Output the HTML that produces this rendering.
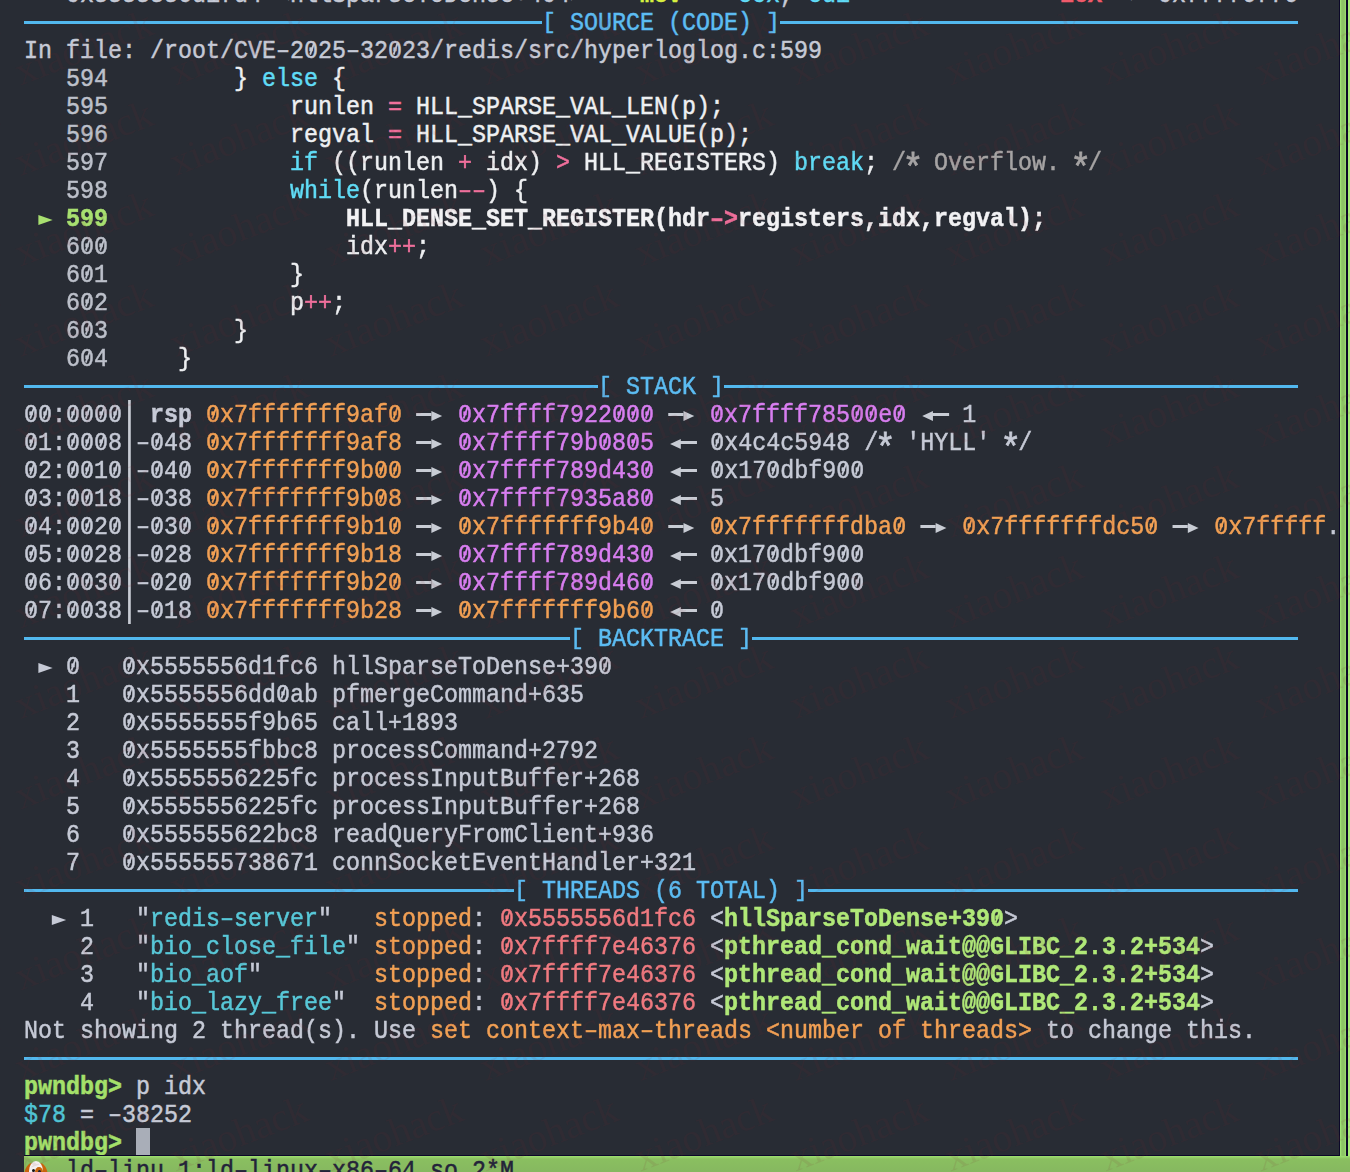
<!DOCTYPE html>
<html><head><meta charset="utf-8">
<style>
html,body{margin:0;padding:0;}
body{width:1350px;height:1172px;background:#282c34;position:relative;overflow:hidden;font-family:"Liberation Mono",monospace;}
.r{position:absolute;left:24px;height:28px;line-height:28px;white-space:pre;font-size:26.0px;transform:scaleX(0.89729);transform-origin:0 0;color:#c6cad6;padding-top:1px;box-sizing:border-box;-webkit-text-stroke:0.5px currentColor;}
.ln{color:#bcc0ca}
.w{color:#eef0f2}
.c{color:#60dcf6}
.p{color:#f0709c}
.cm{color:#a6a4a4}
.bk{display:inline-block;transform:translateY(-1.2px) scaleY(0.87);}
.z{font-style:normal;position:relative;}
.z::after{content:"";position:absolute;left:7.634px;top:6.8px;width:2.2px;height:12.1px;background:currentColor;transform:rotate(21deg);}
.ast{display:inline-block;transform:translateY(6.5px) scale(1.5);}
.gr{color:#a8e070;font-weight:bold}
.bw{color:#f2f2f4;font-weight:bold}
.o{color:#f2a054}
.m{color:#d87ef0}
.bl{color:#5cbcf2}
.tn{color:#58c8d8}
.ta{color:#f07a80}
.ts{color:#b0e878;font-weight:bold}
.y{color:#d8f040;font-weight:bold}
.rd{color:#f05a6a;font-weight:bold}
.pg{color:#a4e06a;font-weight:bold}
.cy{color:#50c4d4}
b{font-weight:bold}
.hl{position:absolute;height:3px;background:#52b8ee;}
.ra,.la,.pt,.vb{display:inline-block;position:relative;width:1ch;height:28px;vertical-align:top;}
.ra,.la{width:2ch}
.ra::before{content:"";position:absolute;left:0;width:17.051px;top:12.1px;height:2.8px;background:#c8ccd4;}
.ra::after{content:"";position:absolute;left:17.163px;top:9.9px;width:0;height:0;border-top:5.4px solid transparent;border-bottom:5.4px solid transparent;border-left:12.482px solid #c8ccd4;}
.la::before{content:"";position:absolute;left:13.374px;width:18.946px;top:11.9px;height:2.8px;background:#c8ccd4;}
.la::after{content:"";position:absolute;left:1.783px;top:9.9px;width:0;height:0;border-top:5.4px solid transparent;border-bottom:5.4px solid transparent;border-right:12.036px solid #c8ccd4;}
.pt::after{content:"";position:absolute;left:0;top:10.1px;width:0;height:0;border-top:5.2px solid transparent;border-bottom:5.2px solid transparent;border-left:16.717px solid currentColor;}
.vb::after{content:"";position:absolute;left:6.687px;top:-1px;width:2.898px;height:28px;background:#c8ccd4;}
</style></head><body>
<div class="r" style="top:-20px">   <i class="z">0</i>x5555556d1fd4 &lt;hllSparseToDense+4<i class="z">0</i>4&gt;    <span class="y">mov</span>    <span class="c">ecx</span>, <span class="c">edi</span>               <span class="rd">ECX</span> <span>=&gt;</span> <i class="z">0</i>xffff6f76</div>
<div class="hl" style="left:24px;width:518px;top:21px"></div>
<div class="hl" style="left:780px;width:518px;top:21px"></div>
<div class="r" style="top:8px">                                     <span class="bl"><span class="bk">[</span> SOURCE (CODE) <span class="bk">]</span></span></div>
<div class="r" style="top:36px">In file: /root/CVE–2<i class="z">0</i>25–32<i class="z">0</i>23/redis/src/hyperloglog.c:599</div>
<div class="r" style="top:64px">   <span class="ln">594</span>         <span class="w">} </span><span class="c">else</span><span class="w"> {</span></div>
<div class="r" style="top:92px">   <span class="ln">595</span>             <span class="w">runlen </span><span class="p">=</span><span class="w"> HLL_SPARSE_VAL_LEN(p);</span></div>
<div class="r" style="top:120px">   <span class="ln">596</span>             <span class="w">regval </span><span class="p">=</span><span class="w"> HLL_SPARSE_VAL_VALUE(p);</span></div>
<div class="r" style="top:148px">   <span class="ln">597</span>             <span class="c">if</span><span class="w"> ((runlen </span><span class="p">+</span><span class="w"> idx) </span><span class="p">&gt;</span><span class="w"> HLL_REGISTERS) </span><span class="c">break</span><span class="w">;</span> <span class="cm">/<span class="ast">*</span> Overflow. <span class="ast">*</span>/</span></div>
<div class="r" style="top:176px">   <span class="ln">598</span>             <span class="c">while</span><span class="w">(runlen</span><span class="p">––</span><span class="w">) {</span></div>
<div class="r" style="top:204px"> <i class="pt gr"></i> <span class="gr">599</span>                 <span class="bw">HLL_DENSE_SET_REGISTER(hdr<span class="p">–&gt;</span>registers,idx,regval);</span></div>
<div class="r" style="top:232px">   <span class="ln">6<i class="z">0</i><i class="z">0</i></span>                 <span class="w">idx</span><span class="p">++</span><span class="w">;</span></div>
<div class="r" style="top:260px">   <span class="ln">6<i class="z">0</i>1</span>             <span class="w">}</span></div>
<div class="r" style="top:288px">   <span class="ln">6<i class="z">0</i>2</span>             <span class="w">p</span><span class="p">++</span><span class="w">;</span></div>
<div class="r" style="top:316px">   <span class="ln">6<i class="z">0</i>3</span>         <span class="w">}</span></div>
<div class="r" style="top:344px">   <span class="ln">6<i class="z">0</i>4</span>     <span class="w">}</span></div>
<div class="hl" style="left:24px;width:574px;top:385px"></div>
<div class="hl" style="left:724px;width:574px;top:385px"></div>
<div class="r" style="top:372px">                                         <span class="bl"><span class="bk">[</span> STACK <span class="bk">]</span></span></div>
<div class="r" style="top:400px"><i class="z">0</i><i class="z">0</i>:<i class="z">0</i><i class="z">0</i><i class="z">0</i><i class="z">0</i><i class="vb"></i> <b>rsp</b> <span class="o"><i class="z">0</i>x7fffffff9af<i class="z">0</i></span> <i class="ra"></i> <span class="m"><i class="z">0</i>x7ffff7922<i class="z">0</i><i class="z">0</i><i class="z">0</i></span> <i class="ra"></i> <span class="m"><i class="z">0</i>x7ffff785<i class="z">0</i><i class="z">0</i>e<i class="z">0</i></span> <i class="la"></i> 1</div>
<div class="r" style="top:428px"><i class="z">0</i>1:<i class="z">0</i><i class="z">0</i><i class="z">0</i>8<i class="vb"></i>–<i class="z">0</i>48 <span class="o"><i class="z">0</i>x7fffffff9af8</span> <i class="ra"></i> <span class="m"><i class="z">0</i>x7ffff79b<i class="z">0</i>8<i class="z">0</i>5</span> <i class="la"></i> <i class="z">0</i>x4c4c5948 /<span class="ast">*</span> 'HYLL' <span class="ast">*</span>/</div>
<div class="r" style="top:456px"><i class="z">0</i>2:<i class="z">0</i><i class="z">0</i>1<i class="z">0</i><i class="vb"></i>–<i class="z">0</i>4<i class="z">0</i> <span class="o"><i class="z">0</i>x7fffffff9b<i class="z">0</i><i class="z">0</i></span> <i class="ra"></i> <span class="m"><i class="z">0</i>x7ffff789d43<i class="z">0</i></span> <i class="la"></i> <i class="z">0</i>x17<i class="z">0</i>dbf9<i class="z">0</i><i class="z">0</i></div>
<div class="r" style="top:484px"><i class="z">0</i>3:<i class="z">0</i><i class="z">0</i>18<i class="vb"></i>–<i class="z">0</i>38 <span class="o"><i class="z">0</i>x7fffffff9b<i class="z">0</i>8</span> <i class="ra"></i> <span class="m"><i class="z">0</i>x7ffff7935a8<i class="z">0</i></span> <i class="la"></i> 5</div>
<div class="r" style="top:512px"><i class="z">0</i>4:<i class="z">0</i><i class="z">0</i>2<i class="z">0</i><i class="vb"></i>–<i class="z">0</i>3<i class="z">0</i> <span class="o"><i class="z">0</i>x7fffffff9b1<i class="z">0</i></span> <i class="ra"></i> <span class="o"><i class="z">0</i>x7fffffff9b4<i class="z">0</i></span> <i class="ra"></i> <span class="o"><i class="z">0</i>x7fffffffdba<i class="z">0</i></span> <i class="ra"></i> <span class="o"><i class="z">0</i>x7fffffffdc5<i class="z">0</i></span> <i class="ra"></i> <span class="o"><i class="z">0</i>x7fffff</span>.</div>
<div class="r" style="top:540px"><i class="z">0</i>5:<i class="z">0</i><i class="z">0</i>28<i class="vb"></i>–<i class="z">0</i>28 <span class="o"><i class="z">0</i>x7fffffff9b18</span> <i class="ra"></i> <span class="m"><i class="z">0</i>x7ffff789d43<i class="z">0</i></span> <i class="la"></i> <i class="z">0</i>x17<i class="z">0</i>dbf9<i class="z">0</i><i class="z">0</i></div>
<div class="r" style="top:568px"><i class="z">0</i>6:<i class="z">0</i><i class="z">0</i>3<i class="z">0</i><i class="vb"></i>–<i class="z">0</i>2<i class="z">0</i> <span class="o"><i class="z">0</i>x7fffffff9b2<i class="z">0</i></span> <i class="ra"></i> <span class="m"><i class="z">0</i>x7ffff789d46<i class="z">0</i></span> <i class="la"></i> <i class="z">0</i>x17<i class="z">0</i>dbf9<i class="z">0</i><i class="z">0</i></div>
<div class="r" style="top:596px"><i class="z">0</i>7:<i class="z">0</i><i class="z">0</i>38<i class="vb"></i>–<i class="z">0</i>18 <span class="o"><i class="z">0</i>x7fffffff9b28</span> <i class="ra"></i> <span class="o"><i class="z">0</i>x7fffffff9b6<i class="z">0</i></span> <i class="la"></i> <i class="z">0</i></div>
<div class="hl" style="left:24px;width:546px;top:637px"></div>
<div class="hl" style="left:752px;width:546px;top:637px"></div>
<div class="r" style="top:624px">                                       <span class="bl"><span class="bk">[</span> BACKTRACE <span class="bk">]</span></span></div>
<div class="r" style="top:652px"> <i class="pt"></i> <i class="z">0</i>   <i class="z">0</i>x5555556d1fc6 hllSparseToDense+39<i class="z">0</i></div>
<div class="r" style="top:680px">   1   <i class="z">0</i>x5555556dd<i class="z">0</i>ab pfmergeCommand+635</div>
<div class="r" style="top:708px">   2   <i class="z">0</i>x5555555f9b65 call+1893</div>
<div class="r" style="top:736px">   3   <i class="z">0</i>x5555555fbbc8 processCommand+2792</div>
<div class="r" style="top:764px">   4   <i class="z">0</i>x5555556225fc processInputBuffer+268</div>
<div class="r" style="top:792px">   5   <i class="z">0</i>x5555556225fc processInputBuffer+268</div>
<div class="r" style="top:820px">   6   <i class="z">0</i>x555555622bc8 readQueryFromClient+936</div>
<div class="r" style="top:848px">   7   <i class="z">0</i>x555555738671 connSocketEventHandler+321</div>
<div class="hl" style="left:24px;width:490px;top:889px"></div>
<div class="hl" style="left:808px;width:490px;top:889px"></div>
<div class="r" style="top:876px">                                   <span class="bl"><span class="bk">[</span> THREADS (6 TOTAL) <span class="bk">]</span></span></div>
<div class="r" style="top:904px">  <i class="pt"></i> 1   "<span class="tn">redis–server</span>"   <span class="o">stopped</span>: <span class="ta"><i class="z">0</i>x5555556d1fc6</span> &lt;<span class="ts">hllSparseToDense+39<i class="z">0</i></span>&gt;</div>
<div class="r" style="top:932px">    2   "<span class="tn">bio_close_file</span>" <span class="o">stopped</span>: <span class="ta"><i class="z">0</i>x7ffff7e46376</span> &lt;<span class="ts">pthread_cond_wait@@GLIBC_2.3.2+534</span>&gt;</div>
<div class="r" style="top:960px">    3   "<span class="tn">bio_aof</span>"        <span class="o">stopped</span>: <span class="ta"><i class="z">0</i>x7ffff7e46376</span> &lt;<span class="ts">pthread_cond_wait@@GLIBC_2.3.2+534</span>&gt;</div>
<div class="r" style="top:988px">    4   "<span class="tn">bio_lazy_free</span>"  <span class="o">stopped</span>: <span class="ta"><i class="z">0</i>x7ffff7e46376</span> &lt;<span class="ts">pthread_cond_wait@@GLIBC_2.3.2+534</span>&gt;</div>
<div class="r" style="top:1016px">Not showing 2 thread(s). Use <span class="o">set context–max–threads &lt;number of threads&gt;</span> to change this.</div>
<div class="hl" style="left:24px;width:1274px;top:1057px"></div>
<div class="r" style="top:1072px"><span class="pg">pwndbg&gt;</span> p idx</div>
<div class="r" style="top:1100px"><span class="cy">$78</span> = –38252</div>
<div class="r" style="top:1128px"><span class="pg">pwndbg&gt;</span> </div>
<div style="position:absolute;left:136px;top:1128px;width:14px;height:28px;background:#a9aeb8"></div>
<div style="position:absolute;left:24px;top:1156px;width:1326px;height:16px;background:linear-gradient(#9ee070 0,#8abf60 3px,#86b860)"></div>
<div style="position:absolute;left:25px;top:1161px;width:22px;height:20px;"><div style="position:absolute;left:0;top:2px;width:8px;height:16px;border-radius:50%;background:#c8640c;transform:rotate(20deg)"></div><div style="position:absolute;right:0;top:2px;width:8px;height:16px;border-radius:50%;background:#c8640c;transform:rotate(-20deg)"></div><div style="position:absolute;left:4px;top:0;width:14px;height:20px;border-radius:50%;background:#f4f0f0"></div><div style="position:absolute;left:10px;top:6px;width:8px;height:10px;border-radius:50%;background:#c8640c"></div><div style="position:absolute;left:7px;top:8px;width:3px;height:3px;border-radius:50%;background:#111"></div><div style="position:absolute;left:13px;top:9px;width:3px;height:3px;border-radius:50%;background:#223"></div></div>
<div class="r" style="top:1156px;color:#23233a">   ld–linu 1:ld–linux–x86–64.so 2*M</div>
<div style="position:absolute;left:1339px;top:0;width:11px;height:1156px;background:#0c0828"></div>
<div style="position:absolute;left:1340px;top:0;width:6px;height:1156px;background:linear-gradient(90deg,#a8ee78,#8cc466 30%,#8cc466 70%,#a0e470)"></div>
<div style="position:absolute;left:1348px;top:0;width:2px;height:1156px;background:#a8ee78"></div>
<div style="position:absolute;left:24px;top:1155px;width:1316px;height:1px;background:#0c0828"></div>
<svg style="position:absolute;left:0;top:0" width="1350" height="1172"><g font-family="Liberation Serif" font-size="40" fill="#802a34" fill-opacity="0.10"><text x="-134.0" y="-95.5" transform="rotate(-21 -134.0 -95.5)">xiaohack</text><text x="21.0" y="-95.5" transform="rotate(-21 21.0 -95.5)">xiaohack</text><text x="176.0" y="-95.5" transform="rotate(-21 176.0 -95.5)">xiaohack</text><text x="331.0" y="-95.5" transform="rotate(-21 331.0 -95.5)">xiaohack</text><text x="486.0" y="-95.5" transform="rotate(-21 486.0 -95.5)">xiaohack</text><text x="641.0" y="-95.5" transform="rotate(-21 641.0 -95.5)">xiaohack</text><text x="796.0" y="-95.5" transform="rotate(-21 796.0 -95.5)">xiaohack</text><text x="951.0" y="-95.5" transform="rotate(-21 951.0 -95.5)">xiaohack</text><text x="1106.0" y="-95.5" transform="rotate(-21 1106.0 -95.5)">xiaohack</text><text x="1261.0" y="-95.5" transform="rotate(-21 1261.0 -95.5)">xiaohack</text><text x="-134.0" y="-5.0" transform="rotate(-21 -134.0 -5.0)">xiaohack</text><text x="21.0" y="-5.0" transform="rotate(-21 21.0 -5.0)">xiaohack</text><text x="176.0" y="-5.0" transform="rotate(-21 176.0 -5.0)">xiaohack</text><text x="331.0" y="-5.0" transform="rotate(-21 331.0 -5.0)">xiaohack</text><text x="486.0" y="-5.0" transform="rotate(-21 486.0 -5.0)">xiaohack</text><text x="641.0" y="-5.0" transform="rotate(-21 641.0 -5.0)">xiaohack</text><text x="796.0" y="-5.0" transform="rotate(-21 796.0 -5.0)">xiaohack</text><text x="951.0" y="-5.0" transform="rotate(-21 951.0 -5.0)">xiaohack</text><text x="1106.0" y="-5.0" transform="rotate(-21 1106.0 -5.0)">xiaohack</text><text x="1261.0" y="-5.0" transform="rotate(-21 1261.0 -5.0)">xiaohack</text><text x="-134.0" y="85.5" transform="rotate(-21 -134.0 85.5)">xiaohack</text><text x="21.0" y="85.5" transform="rotate(-21 21.0 85.5)">xiaohack</text><text x="176.0" y="85.5" transform="rotate(-21 176.0 85.5)">xiaohack</text><text x="331.0" y="85.5" transform="rotate(-21 331.0 85.5)">xiaohack</text><text x="486.0" y="85.5" transform="rotate(-21 486.0 85.5)">xiaohack</text><text x="641.0" y="85.5" transform="rotate(-21 641.0 85.5)">xiaohack</text><text x="796.0" y="85.5" transform="rotate(-21 796.0 85.5)">xiaohack</text><text x="951.0" y="85.5" transform="rotate(-21 951.0 85.5)">xiaohack</text><text x="1106.0" y="85.5" transform="rotate(-21 1106.0 85.5)">xiaohack</text><text x="1261.0" y="85.5" transform="rotate(-21 1261.0 85.5)">xiaohack</text><text x="-134.0" y="176.0" transform="rotate(-21 -134.0 176.0)">xiaohack</text><text x="21.0" y="176.0" transform="rotate(-21 21.0 176.0)">xiaohack</text><text x="176.0" y="176.0" transform="rotate(-21 176.0 176.0)">xiaohack</text><text x="331.0" y="176.0" transform="rotate(-21 331.0 176.0)">xiaohack</text><text x="486.0" y="176.0" transform="rotate(-21 486.0 176.0)">xiaohack</text><text x="641.0" y="176.0" transform="rotate(-21 641.0 176.0)">xiaohack</text><text x="796.0" y="176.0" transform="rotate(-21 796.0 176.0)">xiaohack</text><text x="951.0" y="176.0" transform="rotate(-21 951.0 176.0)">xiaohack</text><text x="1106.0" y="176.0" transform="rotate(-21 1106.0 176.0)">xiaohack</text><text x="1261.0" y="176.0" transform="rotate(-21 1261.0 176.0)">xiaohack</text><text x="-134.0" y="266.5" transform="rotate(-21 -134.0 266.5)">xiaohack</text><text x="21.0" y="266.5" transform="rotate(-21 21.0 266.5)">xiaohack</text><text x="176.0" y="266.5" transform="rotate(-21 176.0 266.5)">xiaohack</text><text x="331.0" y="266.5" transform="rotate(-21 331.0 266.5)">xiaohack</text><text x="486.0" y="266.5" transform="rotate(-21 486.0 266.5)">xiaohack</text><text x="641.0" y="266.5" transform="rotate(-21 641.0 266.5)">xiaohack</text><text x="796.0" y="266.5" transform="rotate(-21 796.0 266.5)">xiaohack</text><text x="951.0" y="266.5" transform="rotate(-21 951.0 266.5)">xiaohack</text><text x="1106.0" y="266.5" transform="rotate(-21 1106.0 266.5)">xiaohack</text><text x="1261.0" y="266.5" transform="rotate(-21 1261.0 266.5)">xiaohack</text><text x="-134.0" y="357.0" transform="rotate(-21 -134.0 357.0)">xiaohack</text><text x="21.0" y="357.0" transform="rotate(-21 21.0 357.0)">xiaohack</text><text x="176.0" y="357.0" transform="rotate(-21 176.0 357.0)">xiaohack</text><text x="331.0" y="357.0" transform="rotate(-21 331.0 357.0)">xiaohack</text><text x="486.0" y="357.0" transform="rotate(-21 486.0 357.0)">xiaohack</text><text x="641.0" y="357.0" transform="rotate(-21 641.0 357.0)">xiaohack</text><text x="796.0" y="357.0" transform="rotate(-21 796.0 357.0)">xiaohack</text><text x="951.0" y="357.0" transform="rotate(-21 951.0 357.0)">xiaohack</text><text x="1106.0" y="357.0" transform="rotate(-21 1106.0 357.0)">xiaohack</text><text x="1261.0" y="357.0" transform="rotate(-21 1261.0 357.0)">xiaohack</text><text x="-134.0" y="447.5" transform="rotate(-21 -134.0 447.5)">xiaohack</text><text x="21.0" y="447.5" transform="rotate(-21 21.0 447.5)">xiaohack</text><text x="176.0" y="447.5" transform="rotate(-21 176.0 447.5)">xiaohack</text><text x="331.0" y="447.5" transform="rotate(-21 331.0 447.5)">xiaohack</text><text x="486.0" y="447.5" transform="rotate(-21 486.0 447.5)">xiaohack</text><text x="641.0" y="447.5" transform="rotate(-21 641.0 447.5)">xiaohack</text><text x="796.0" y="447.5" transform="rotate(-21 796.0 447.5)">xiaohack</text><text x="951.0" y="447.5" transform="rotate(-21 951.0 447.5)">xiaohack</text><text x="1106.0" y="447.5" transform="rotate(-21 1106.0 447.5)">xiaohack</text><text x="1261.0" y="447.5" transform="rotate(-21 1261.0 447.5)">xiaohack</text><text x="-134.0" y="538.0" transform="rotate(-21 -134.0 538.0)">xiaohack</text><text x="21.0" y="538.0" transform="rotate(-21 21.0 538.0)">xiaohack</text><text x="176.0" y="538.0" transform="rotate(-21 176.0 538.0)">xiaohack</text><text x="331.0" y="538.0" transform="rotate(-21 331.0 538.0)">xiaohack</text><text x="486.0" y="538.0" transform="rotate(-21 486.0 538.0)">xiaohack</text><text x="641.0" y="538.0" transform="rotate(-21 641.0 538.0)">xiaohack</text><text x="796.0" y="538.0" transform="rotate(-21 796.0 538.0)">xiaohack</text><text x="951.0" y="538.0" transform="rotate(-21 951.0 538.0)">xiaohack</text><text x="1106.0" y="538.0" transform="rotate(-21 1106.0 538.0)">xiaohack</text><text x="1261.0" y="538.0" transform="rotate(-21 1261.0 538.0)">xiaohack</text><text x="-134.0" y="628.5" transform="rotate(-21 -134.0 628.5)">xiaohack</text><text x="21.0" y="628.5" transform="rotate(-21 21.0 628.5)">xiaohack</text><text x="176.0" y="628.5" transform="rotate(-21 176.0 628.5)">xiaohack</text><text x="331.0" y="628.5" transform="rotate(-21 331.0 628.5)">xiaohack</text><text x="486.0" y="628.5" transform="rotate(-21 486.0 628.5)">xiaohack</text><text x="641.0" y="628.5" transform="rotate(-21 641.0 628.5)">xiaohack</text><text x="796.0" y="628.5" transform="rotate(-21 796.0 628.5)">xiaohack</text><text x="951.0" y="628.5" transform="rotate(-21 951.0 628.5)">xiaohack</text><text x="1106.0" y="628.5" transform="rotate(-21 1106.0 628.5)">xiaohack</text><text x="1261.0" y="628.5" transform="rotate(-21 1261.0 628.5)">xiaohack</text><text x="-134.0" y="719.0" transform="rotate(-21 -134.0 719.0)">xiaohack</text><text x="21.0" y="719.0" transform="rotate(-21 21.0 719.0)">xiaohack</text><text x="176.0" y="719.0" transform="rotate(-21 176.0 719.0)">xiaohack</text><text x="331.0" y="719.0" transform="rotate(-21 331.0 719.0)">xiaohack</text><text x="486.0" y="719.0" transform="rotate(-21 486.0 719.0)">xiaohack</text><text x="641.0" y="719.0" transform="rotate(-21 641.0 719.0)">xiaohack</text><text x="796.0" y="719.0" transform="rotate(-21 796.0 719.0)">xiaohack</text><text x="951.0" y="719.0" transform="rotate(-21 951.0 719.0)">xiaohack</text><text x="1106.0" y="719.0" transform="rotate(-21 1106.0 719.0)">xiaohack</text><text x="1261.0" y="719.0" transform="rotate(-21 1261.0 719.0)">xiaohack</text><text x="-134.0" y="809.5" transform="rotate(-21 -134.0 809.5)">xiaohack</text><text x="21.0" y="809.5" transform="rotate(-21 21.0 809.5)">xiaohack</text><text x="176.0" y="809.5" transform="rotate(-21 176.0 809.5)">xiaohack</text><text x="331.0" y="809.5" transform="rotate(-21 331.0 809.5)">xiaohack</text><text x="486.0" y="809.5" transform="rotate(-21 486.0 809.5)">xiaohack</text><text x="641.0" y="809.5" transform="rotate(-21 641.0 809.5)">xiaohack</text><text x="796.0" y="809.5" transform="rotate(-21 796.0 809.5)">xiaohack</text><text x="951.0" y="809.5" transform="rotate(-21 951.0 809.5)">xiaohack</text><text x="1106.0" y="809.5" transform="rotate(-21 1106.0 809.5)">xiaohack</text><text x="1261.0" y="809.5" transform="rotate(-21 1261.0 809.5)">xiaohack</text><text x="-134.0" y="900.0" transform="rotate(-21 -134.0 900.0)">xiaohack</text><text x="21.0" y="900.0" transform="rotate(-21 21.0 900.0)">xiaohack</text><text x="176.0" y="900.0" transform="rotate(-21 176.0 900.0)">xiaohack</text><text x="331.0" y="900.0" transform="rotate(-21 331.0 900.0)">xiaohack</text><text x="486.0" y="900.0" transform="rotate(-21 486.0 900.0)">xiaohack</text><text x="641.0" y="900.0" transform="rotate(-21 641.0 900.0)">xiaohack</text><text x="796.0" y="900.0" transform="rotate(-21 796.0 900.0)">xiaohack</text><text x="951.0" y="900.0" transform="rotate(-21 951.0 900.0)">xiaohack</text><text x="1106.0" y="900.0" transform="rotate(-21 1106.0 900.0)">xiaohack</text><text x="1261.0" y="900.0" transform="rotate(-21 1261.0 900.0)">xiaohack</text><text x="-134.0" y="990.5" transform="rotate(-21 -134.0 990.5)">xiaohack</text><text x="21.0" y="990.5" transform="rotate(-21 21.0 990.5)">xiaohack</text><text x="176.0" y="990.5" transform="rotate(-21 176.0 990.5)">xiaohack</text><text x="331.0" y="990.5" transform="rotate(-21 331.0 990.5)">xiaohack</text><text x="486.0" y="990.5" transform="rotate(-21 486.0 990.5)">xiaohack</text><text x="641.0" y="990.5" transform="rotate(-21 641.0 990.5)">xiaohack</text><text x="796.0" y="990.5" transform="rotate(-21 796.0 990.5)">xiaohack</text><text x="951.0" y="990.5" transform="rotate(-21 951.0 990.5)">xiaohack</text><text x="1106.0" y="990.5" transform="rotate(-21 1106.0 990.5)">xiaohack</text><text x="1261.0" y="990.5" transform="rotate(-21 1261.0 990.5)">xiaohack</text><text x="-134.0" y="1081.0" transform="rotate(-21 -134.0 1081.0)">xiaohack</text><text x="21.0" y="1081.0" transform="rotate(-21 21.0 1081.0)">xiaohack</text><text x="176.0" y="1081.0" transform="rotate(-21 176.0 1081.0)">xiaohack</text><text x="331.0" y="1081.0" transform="rotate(-21 331.0 1081.0)">xiaohack</text><text x="486.0" y="1081.0" transform="rotate(-21 486.0 1081.0)">xiaohack</text><text x="641.0" y="1081.0" transform="rotate(-21 641.0 1081.0)">xiaohack</text><text x="796.0" y="1081.0" transform="rotate(-21 796.0 1081.0)">xiaohack</text><text x="951.0" y="1081.0" transform="rotate(-21 951.0 1081.0)">xiaohack</text><text x="1106.0" y="1081.0" transform="rotate(-21 1106.0 1081.0)">xiaohack</text><text x="1261.0" y="1081.0" transform="rotate(-21 1261.0 1081.0)">xiaohack</text><text x="-134.0" y="1171.5" transform="rotate(-21 -134.0 1171.5)">xiaohack</text><text x="21.0" y="1171.5" transform="rotate(-21 21.0 1171.5)">xiaohack</text><text x="176.0" y="1171.5" transform="rotate(-21 176.0 1171.5)">xiaohack</text><text x="331.0" y="1171.5" transform="rotate(-21 331.0 1171.5)">xiaohack</text><text x="486.0" y="1171.5" transform="rotate(-21 486.0 1171.5)">xiaohack</text><text x="641.0" y="1171.5" transform="rotate(-21 641.0 1171.5)">xiaohack</text><text x="796.0" y="1171.5" transform="rotate(-21 796.0 1171.5)">xiaohack</text><text x="951.0" y="1171.5" transform="rotate(-21 951.0 1171.5)">xiaohack</text><text x="1106.0" y="1171.5" transform="rotate(-21 1106.0 1171.5)">xiaohack</text><text x="1261.0" y="1171.5" transform="rotate(-21 1261.0 1171.5)">xiaohack</text><text x="-134.0" y="1262.0" transform="rotate(-21 -134.0 1262.0)">xiaohack</text><text x="21.0" y="1262.0" transform="rotate(-21 21.0 1262.0)">xiaohack</text><text x="176.0" y="1262.0" transform="rotate(-21 176.0 1262.0)">xiaohack</text><text x="331.0" y="1262.0" transform="rotate(-21 331.0 1262.0)">xiaohack</text><text x="486.0" y="1262.0" transform="rotate(-21 486.0 1262.0)">xiaohack</text><text x="641.0" y="1262.0" transform="rotate(-21 641.0 1262.0)">xiaohack</text><text x="796.0" y="1262.0" transform="rotate(-21 796.0 1262.0)">xiaohack</text><text x="951.0" y="1262.0" transform="rotate(-21 951.0 1262.0)">xiaohack</text><text x="1106.0" y="1262.0" transform="rotate(-21 1106.0 1262.0)">xiaohack</text><text x="1261.0" y="1262.0" transform="rotate(-21 1261.0 1262.0)">xiaohack</text></g></svg>
</body></html>
